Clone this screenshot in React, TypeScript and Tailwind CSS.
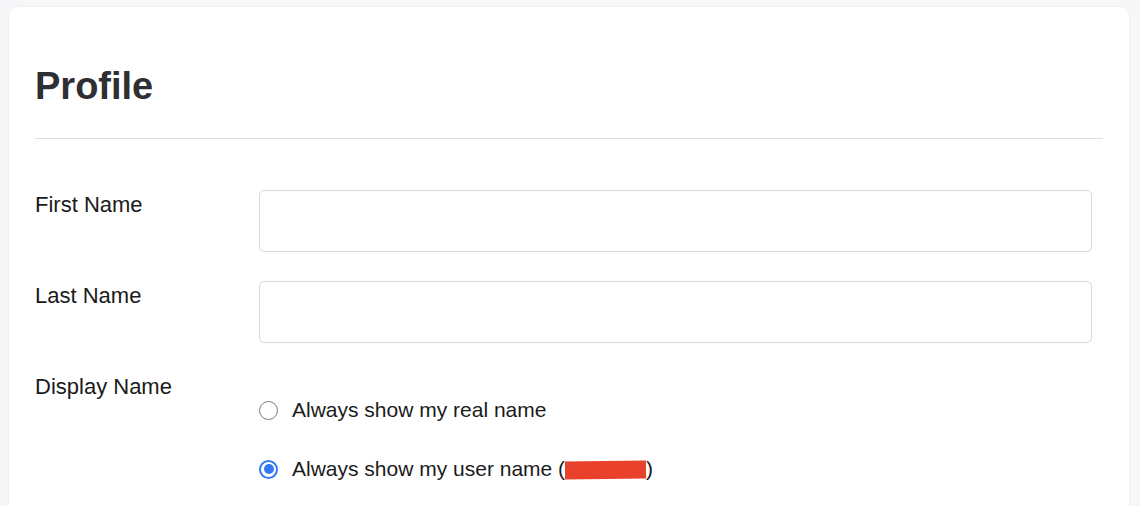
import React from "react";

const font = { fontFamily: '"Liberation Sans", Arial, Helvetica, sans-serif' };

function Field({ label }: { label: string }) {
  return (
    <div className="flex items-start">
      <label className="w-[224px] shrink-0 pt-[1px] text-[22px] leading-[28px] text-[#1b1b1b]">{label}</label>
      <input
        type="text"
        className="h-[62px] flex-1 rounded-[5px] border border-[#d9d9d9] bg-white px-3 text-[21px] outline-none"
      />
    </div>
  );
}

function Radio({ checked, children }: { checked?: boolean; children: React.ReactNode }) {
  return (
    <label className="flex h-[26px] items-center gap-[14px] text-[21px] text-[#1b1b1b]">
      {checked ? (
        <span className="flex h-[19px] w-[19px] items-center justify-center rounded-full border-[2px] border-[#3478f6] bg-white">
          <span className="h-[10px] w-[10px] rounded-full bg-[#3478f6]" />
        </span>
      ) : (
        <span className="h-[19px] w-[19px] rounded-full border-[1.5px] border-[#7c7c7c] bg-white" />
      )}
      <span className="flex items-center">{children}</span>
    </label>
  );
}

export default function App() {
  return (
    <div className="min-h-screen bg-[#f7f7f9] pl-[9px] pr-[11px] pt-[7px]" style={font}>
      <div className="rounded-[10px] bg-white px-[26px] pb-10 pt-[56px] shadow-[0_0_3px_rgba(0,0,0,0.06)]">
        <h1 className="text-[38px] font-bold leading-[46px] text-[#2e2f33]">Profile</h1>
        <div className="mt-[29px] h-px bg-[#dedede]" />

        <div className="mt-[51px] flex flex-col gap-[29px] pr-[11px]">
          <Field label="First Name" />
          <Field label="Last Name" />
          <div className="flex items-start">
            <span className="w-[224px] shrink-0 pt-[1px] text-[22px] leading-[28px] text-[#1b1b1b]">Display Name</span>
            <div className="flex flex-col gap-[33px] pt-[25px]">
              <Radio>Always show my real name</Radio>
              <Radio checked>
                <span className="whitespace-pre">Always show my user name (</span>
                <span className="mt-[1px] inline-block h-[18px] w-[81px] -rotate-[0.6deg] bg-[#e8412c]" />
                <span>)</span>
              </Radio>
            </div>
          </div>
        </div>
      </div>
    </div>
  );
}
